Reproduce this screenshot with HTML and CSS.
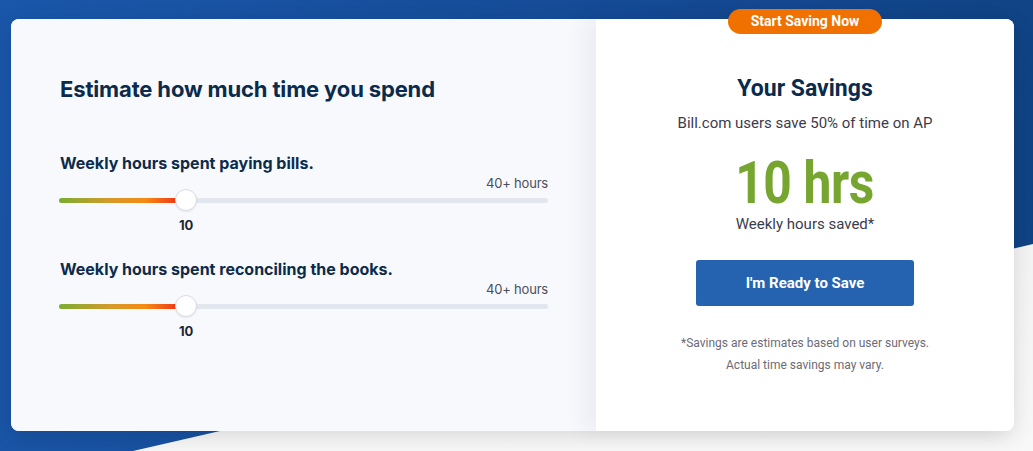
FILE: index.html
```html
<!DOCTYPE html>
<html lang="en">
<head>
<meta charset="utf-8">
<title>Savings Calculator</title>
<link rel="stylesheet" href="styles.css">
</head>
<body>
<div class="bg-shape"></div>
<main class="page">
  <section class="card">
    <div class="estimate">
      <h2 class="estimate-title">Estimate how much time you spend</h2>

      <div class="group">
        <div class="group-label">Weekly hours spent paying bills.</div>
        <div class="max-label">40+ hours</div>
        <div class="slider">
          <div class="track">
            <div class="fill" style="width: 26%"></div>
          </div>
          <div class="thumb" style="left: 26%"><span class="thumb-value">10</span></div>
        </div>
      </div>

      <div class="group">
        <div class="group-label">Weekly hours spent reconciling the books.</div>
        <div class="max-label">40+ hours</div>
        <div class="slider">
          <div class="track">
            <div class="fill" style="width: 26%"></div>
          </div>
          <div class="thumb" style="left: 26%"><span class="thumb-value">10</span></div>
        </div>
      </div>
    </div>

    <div class="savings">
      <a class="badge" href="#">Start Saving Now</a>
      <h2 class="savings-title">Your Savings</h2>
      <p class="savings-sub">Bill.com users save 50% of time on AP</p>
      <div class="savings-value">10 hrs</div>
      <p class="savings-caption">Weekly hours saved*</p>
      <a class="cta" href="#">I'm Ready to Save</a>
      <p class="note">*Savings are estimates based on user surveys.<br>Actual time savings may vary.</p>
    </div>
  </section>
</main>
</body>
</html>
```

FILE: styles.css
```css
* { box-sizing: border-box; }

html, body {
  margin: 0;
  height: 100%;
}

body {
  position: relative;
  font-family: Inter, "Noto Sans", sans-serif;
  background: linear-gradient(180deg, #eeeeee 0%, #f8f8f8 100%);
  overflow: hidden;
}

.bg-shape {
  position: absolute;
  inset: 0;
  background: linear-gradient(100deg, #1a56a9 0%, #164c98 50%, #0f4282 100%);
  clip-path: polygon(0 0, 100% 0, 100% 244px, 133px 451px, 0 451px);
}

.page {
  position: relative;
  padding: 19px 19px 20px 11px;
}

.card {
  display: flex;
  width: 1003px;
  height: 412px;
  border-radius: 8px;
  background: #f8f9fd;
  box-shadow: 0 6px 22px rgba(0, 0, 0, 0.12);
}

.estimate {
  width: 585px;
  padding: 56px 48px 0 48px;
  border-radius: 8px 0 0 8px;
  background: #f8f9fd;
}

.estimate-title {
  margin: 0 0 50px 1px;
  font-size: 22px;
  line-height: 28px;
  font-weight: 700;
  color: #0b2b4c;
  letter-spacing: -0.15px;
}

.group {
  padding-bottom: 22px;
  margin-bottom: 26px;
}

.group-label {
  margin-left: 1px;
  font-size: 16px;
  line-height: 20px;
  font-weight: 700;
  color: #0b2b4c;
}

.max-label {
  margin-top: 2px;
  text-align: right;
  font-size: 13px;
  line-height: 16px;
  color: #4a4f5a;
  letter-spacing: -0.2px;
}

.slider {
  position: relative;
  height: 22px;
  margin-top: -2px;
}

.track {
  position: absolute;
  left: 0;
  right: 0;
  top: 9px;
  height: 5px;
  border-radius: 3px;
  background: #e1e6ef;
}

.fill {
  height: 100%;
  border-radius: 3px;
  background: linear-gradient(90deg, #79ad32 0%, #d59a2a 40%, #f58a14 68%, #ec2114 100%);
}

.thumb {
  position: absolute;
  top: 0;
  width: 22px;
  height: 22px;
  margin-left: -11px;
  border-radius: 50%;
  background: #ffffff;
  border: 1px solid #d8dce4;
  box-shadow: 0 1px 2px rgba(0, 0, 0, 0.08);
}

.thumb-value {
  position: absolute;
  top: 27px;
  left: 50%;
  transform: translateX(-50%);
  font-size: 13px;
  line-height: 16px;
  font-weight: 700;
  color: #1d2633;
}

.savings {
  position: relative;
  flex: 1;
  display: flex;
  flex-direction: column;
  align-items: center;
  padding-top: 55px;
  border-radius: 0 8px 8px 0;
  background: #ffffff;
  box-shadow: -12px 0 22px rgba(20, 30, 60, 0.06);
  text-align: center;
  font-family: Roboto, "Noto Sans", sans-serif;
}

.badge {
  position: absolute;
  top: -10px;
  left: 50%;
  transform: translateX(-50%);
  width: 154px;
  height: 25px;
  border-radius: 13px;
  background: #f07000;
  color: #ffffff;
  font-size: 14px;
  line-height: 25px;
  font-weight: 700;
  text-decoration: none;
}

.savings-title {
  margin: 0;
  font-size: 23px;
  line-height: 30px;
  font-weight: 700;
  color: #0b2b4c;
}

.savings-sub {
  margin: 9px 0 0;
  font-size: 15px;
  line-height: 20px;
  color: #3b3b4c;
}

.savings-value {
  display: inline-block;
  margin-top: 24px;
  font-size: 60px;
  line-height: 52px;
  font-weight: 700;
  color: #76a530;
  letter-spacing: -0.5px;
  transform: scaleX(0.83);
}

.savings-caption {
  margin: 5px 0 0;
  font-size: 15px;
  line-height: 20px;
  color: #3b3b4c;
}

.cta {
  display: block;
  margin-top: 26px;
  width: 218px;
  height: 46px;
  border-radius: 3px;
  background: #2563b0;
  color: #ffffff;
  font-size: 15px;
  line-height: 46px;
  font-weight: 700;
  text-decoration: none;
}

.note {
  margin: 26px 0 0;
  font-size: 12px;
  line-height: 22px;
  color: #6b6b75;
}
```
